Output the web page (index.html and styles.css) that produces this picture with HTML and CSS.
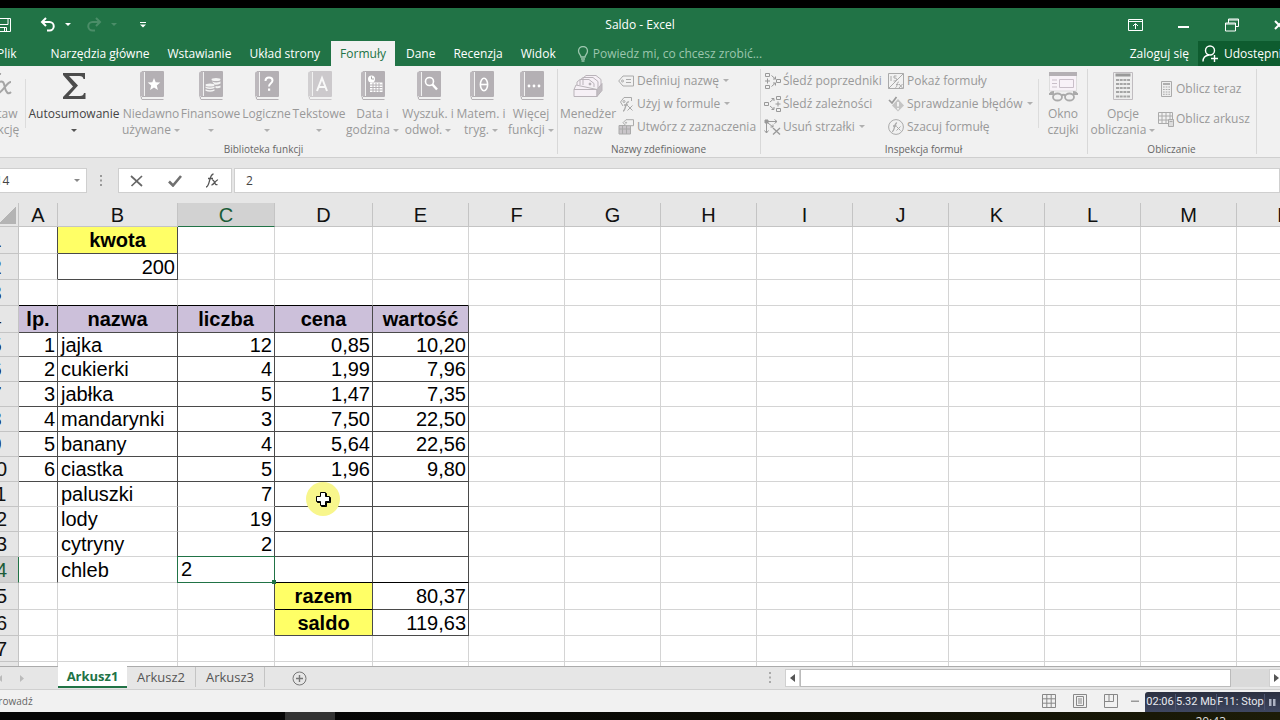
FILE: index.html
```html
<!DOCTYPE html>
<html lang="pl">
<head>
    <meta charset="UTF-8">
    <meta name="viewport" content="width=device-width, initial-scale=1.0">
    <title>Saldo - Excel</title>
    <link rel="stylesheet" href="styles.css">
</head>
<body>
    <svg class="defs" aria-hidden="true">
        <symbol id="book" viewBox="0 0 25 29">
            <path d="M3 .5h21.500v25H3a2 2 0 0 0 0 3h21.500" fill="none" stroke="#b4b0b4"/>
            <path d="M6 1h18.500v24H6z" fill="#b4b0b4"/>
            <path d="M1 2.500A2 2 0 0 1 3 .5h2V25H3q-2 0-2 2z" fill="#bdb9bd"/>
        </symbol>
    </svg>

    <header>
        <div class="title-bar">
            <div class="quick-access">
                <button aria-label="Zapisz"><svg width="16" height="14" viewBox="0 0 16 14" fill="none" stroke="#fff"><path d="M.5 .5h15v13H2.500l-2-2z"/><path d="M3 .5v6h10v-6M4.500 13.500v-4h7v4"/><path d="M9.500 10v3"/></svg></button>
                <button aria-label="Cofnij" class="undo"><svg width="16" height="15" viewBox="0 0 16 15" fill="none" stroke="#fff" stroke-width="2"><path d="M6 1 2 5l4 4M2 5h7.500a4.200 4.200 0 0 1 0 8.500H7"/></svg></button>
                <span class="arrow light"></span>
                <button aria-label="Ponów" class="redo"><svg width="16" height="15" viewBox="0 0 16 15" fill="none" stroke="#4b8d68" stroke-width="2"><path d="m10 1 4 4-4 4M14 5H6.500a4.200 4.200 0 0 0 0 8.500H9"/></svg></button>
                <span class="arrow dim"></span>
                <button aria-label="Dostosuj" class="customize"><svg width="6" height="6" viewBox="0 0 6 6" fill="#fff"><path d="M0 0h6v1H0zM0 2.500h6l-3 3z"/></svg></button>
            </div>
            <h1>Saldo - Excel</h1>
            <div class="window-buttons">
                <button aria-label="Opcje wstążki"><svg width="15" height="12" viewBox="0 0 15 12" fill="none" stroke="#fff"><path d="M.5 .5h14v11H.5zM.5 2.500h14M7.500 10V5M5 7l2.500-2.500L10 7"/></svg></button>
                <button aria-label="Minimalizuj"><svg width="12" height="12" viewBox="0 0 12 12"><path d="M0 7h11v2H0z" fill="#fff"/></svg></button>
                <button aria-label="Przywróć"><svg width="14" height="14" viewBox="0 0 14 14" fill="none" stroke="#fff"><path d="M3.500 5V1h10v7.500H11M3.500 2h10"/><path d="M.5 5h10v8H.5zM.5 6h10"/></svg></button>
                <button aria-label="Zamknij"><svg width="11" height="10" viewBox="0 0 11 10" fill="none" stroke="#fff" stroke-width="2"><path d="m1 1 8 8M9 1 1 9"/></svg></button>
            </div>
        </div>
        <nav class="tabs">
            <a href="#">Plik</a>
            <a href="#">Narzędzia główne</a>
            <a href="#">Wstawianie</a>
            <a href="#">Układ strony</a>
            <a href="#" class="active">Formuły</a>
            <a href="#">Dane</a>
            <a href="#">Recenzja</a>
            <a href="#">Widok</a>
            <a href="#" class="tell-me"><svg width="12" height="16" viewBox="0 0 12 16" fill="none" stroke="#9cc6ae" stroke-width="1.300"><path d="M4 11C4 9 1.500 8 1.500 5a4.500 4.500 0 0 1 9 0C10.500 8 8 9 8 11zM4 13h4M4.500 15h3"/></svg>Powiedz mi, co chcesz zrobić...</a>
            <a href="#" class="sign-in">Zaloguj się</a>
            <a href="#" class="share"><svg width="17" height="17" viewBox="0 0 17 17" fill="none" stroke="#fff" stroke-width="1.400"><circle cx="8" cy="5.500" r="4.500"/><path d="M1 16.500c0-4 2.500-6 6-6.500M12.500 10v7M9 13.500h7"/></svg>Udostępnij</a>
        </nav>
    </header>

    <section class="ribbon">
        <div class="group">
            <div class="tools library">
                <button class="big"><svg width="28" height="29" viewBox="0 0 28 29" fill="none" stroke="#a5a5a5" stroke-width="2"><path d="M2 27c5 1 6-4 7-10S11 2 16 3M5 10h9"/><path d="M14 11c5-2 5 2 6 6s3 7 6 4M26 11c-4 0-7 8-12 11"/></svg><span>Wstaw<br>funkcję</span></button>
                <button class="big enabled divided"><svg width="25" height="29" viewBox="0 0 25 29"><path d="M1 2h22v6h-1.500q-.5-3-4-3H7l9 9.500L6.500 25H18q3.500 0 4-3h1.500v6H1v-2l10-10.500L1 4z" fill="#4c4c4c"/></svg><span>Autosumowanie<br><i class="arrow"></i></span></button>
                <button class="big"><svg width="25" height="29" viewBox="0 0 25 29"><use href="#book"/><path d="m15 7 1.700 4.300 4.600.3-3.500 3 1.100 4.400-3.900-2.400-3.900 2.400 1.100-4.400-3.500-3 4.600-.3z" fill="#fff"/></svg><span>Niedawno<br>używane <i class="arrow"></i></span></button>
                <button class="big"><svg width="25" height="29" viewBox="0 0 25 29"><use href="#book"/><g fill="#f4f4f4"><ellipse cx="18" cy="8.500" rx="4.500" ry="1.500"/><path d="M14 10.500q4 2 8.500 0v2q-4 2-6 1zM17.500 15q3 .5 5-.5v2q-2 1-5 .6z"/><ellipse cx="12" cy="14" rx="4.500" ry="1.500"/><path d="M7.500 15.500q4.500 2 9 0v1.500q-4.500 2-9 0zM7.500 18.200q4.500 2 9 0v1.500q-4.500 2-9 0z"/></g></svg><span>Finansowe<br><i class="arrow"></i></span></button>
                <button class="big"><svg width="25" height="29" viewBox="0 0 25 29"><use href="#book"/><path d="M11.500 10q0-3.500 3.500-3.500t3.500 3c0 3-3.500 2.500-3.500 6" fill="none" stroke="#fff" stroke-width="2"/><path d="M14 17.500h2.200v2.300H14z" fill="#fff"/></svg><span>Logiczne<br><i class="arrow"></i></span></button>
                <button class="big"><svg width="25" height="29" viewBox="0 0 25 29" opacity=".6"><use href="#book"/><path d="m10 20 5-13 5 13M11.500 16h7" fill="none" stroke="#fff" stroke-width="2"/></svg><span>Tekstowe<br><i class="arrow"></i></span></button>
                <button class="big"><svg width="25" height="29" viewBox="0 0 25 29"><use href="#book"/><path d="M10 11.500h12.500V21H10z" fill="#fff"/><path d="M10 14h12.500M10 16.500h12.500M10 19h12.500M13 12v9M16 12v9M19 12v9" stroke="#b4b0b4"/><circle cx="11.500" cy="8" r="3.500" fill="#fff"/><path d="M11.500 5.500V8H14" fill="none" stroke="#aaa"/></svg><span>Data i<br>godzina <i class="arrow"></i></span></button>
                <button class="big"><svg width="25" height="29" viewBox="0 0 25 29"><use href="#book"/><g fill="none" stroke="#fff"><circle cx="13.500" cy="10.500" r="4" stroke-width="1.600"/><path d="m16.500 13.500 4.500 5" stroke-width="2.500"/></g></svg><span>Wyszuk. i<br>odwoł. <i class="arrow"></i></span></button>
                <button class="big"><svg width="25" height="29" viewBox="0 0 25 29"><use href="#book"/><g fill="none" stroke="#fff" stroke-width="1.600"><ellipse cx="15" cy="13.500" rx="3.600" ry="6.200"/><path d="M11.500 13.500h7"/></g></svg><span>Matem. i<br>tryg. <i class="arrow"></i></span></button>
                <button class="big"><svg width="25" height="29" viewBox="0 0 25 29"><use href="#book"/><g fill="#fff"><circle cx="10" cy="15" r="1.400"/><circle cx="15" cy="15" r="1.400"/><circle cx="20" cy="15" r="1.400"/></g></svg><span>Więcej<br>funkcji <i class="arrow"></i></span></button>
            </div>
            <h2>Biblioteka funkcji</h2>
        </div>
        <div class="group">
            <div class="tools names">
                <button class="big"><svg width="30" height="29" viewBox="0 0 30 29" fill="#f6f0f6" stroke="#b9b3b9"><path d="M10 14V7l3-2.500h10l5 4V16M7 14V9l3-2.500h10l5 4V17M4 15v-4l3-2.500h9l5 4V16"/><path d="M3 14 1 18.500v7h23v-7z"/><path d="M1 18.500h23M24 18.500l5-6v7l-5 6z" fill="#c2bdc2"/><circle cx="17" cy="13" r="1" fill="#999"/></svg><span>Menedżer<br>nazw</span></button>
                <div class="list">
                    <button><svg width="17" height="16" viewBox="0 0 17 16" fill="none" stroke="#aaa"><path d="M5 3h10.500v10H5L.7 8zM8 6.500h5M8 9.500h5"/><circle cx="4.500" cy="8" r="1"/></svg>Definiuj nazwę <i class="arrow"></i></button>
                    <button><svg width="17" height="16" viewBox="0 0 17 16" fill="none" stroke="#aaa"><path d="M13.500 5V1.500H6L2.500 6 5 10"/><circle cx="6" cy="5.500" r="1"/><path d="M5 15c3 0 2-10 6-9M6 9h4" stroke-width="1.300"/><path d="m9.500 9.500 5 5M14.500 9.500l-5 5"/></svg>Użyj w formule <i class="arrow"></i></button>
                    <button><svg width="17" height="16" viewBox="0 0 17 16" fill="none" stroke="#aaa"><path d="M1 6.500h11.500v8.500H1z" fill="#c9c5c9"/><path d="M1 10h11.500M4.500 7v8M8.500 7v8"/><path d="M8 .7h7.500v6H8L5 3.700z" fill="#f1f1f1"/><circle cx="8" cy="3.700" r=".6"/></svg>Utwórz z zaznaczenia</button>
                </div>
            </div>
            <h2>Nazwy zdefiniowane</h2>
        </div>
        <div class="group">
            <div class="tools audit">
                <div class="list">
                    <button><svg width="17" height="16" viewBox="0 0 17 16" fill="none" stroke="#999"><path d="M1.500 .5h4v3h-4zM1.500 12.500h4v3h-4zM12.500 6.500h4v3h-4zM1 8h5M3.500 5.500v5M7.500 2.500l4 3.500M11.500 3.500V6H9M7.500 13.500l4-3.500M9 10h2.500v2.500"/></svg>Śledź poprzedniki</button>
                    <button><svg width="17" height="16" viewBox="0 0 17 16" fill="none" stroke="#999"><path d="M12.500 .5h4v3h-4zM12.500 12.500h4v3h-4zM.5 6.500h4v3h-4zM11.500 8h5M14 5.500v5M6 6l4-3.500M7.500 2.500H10V5M6 10l4 3.500M10 11v2.500H7.500"/></svg>Śledź zależności</button>
                    <button><svg width="17" height="16" viewBox="0 0 17 16" fill="none" stroke="#999"><path d="M2.500 2v12M.5 11.500l2 2.500 2-2.500M2 2.500h11M10.500 .5l2.500 2-2.500 2M4 4l5 4M9 5.500V8H6.500"/><path d="m9 9 7 6.500M16 9l-7 6.500" stroke-width="1.300"/><path d="M1 1h3v3H1z" fill="#999"/></svg>Usuń strzałki <i class="arrow"></i></button>
                </div>
                <div class="list">
                    <button><svg width="17" height="16" viewBox="0 0 17 16" fill="none" stroke="#aaa"><path d="M.5 .5h15v15H.5zM.5 15.500l15-15M3 3v5M8.500 3H6v2q3-.5 2.500 1.500T5.500 8M7.500 14.500c2 0 1-6 3.500-5.500M8 11.500h2.500M11 11l3.500 4M14.500 11 11 15"/></svg>Pokaż formuły</button>
                    <button><svg width="17" height="16" viewBox="0 0 17 16" fill="none"><path d="m10 3 6 6.500-6 6-6-6z" fill="#c4c4c4"/><path d="M10 6v4.500M10 12v1.500" stroke="#fff" stroke-width="1.500"/><path d="m1 4 3 3 4.500-6" stroke="#9a9a9a" stroke-width="1.700"/></svg>Sprawdzanie błędów <i class="arrow"></i></button>
                    <button><svg width="17" height="16" viewBox="0 0 17 16" fill="none" stroke="#aaa"><circle cx="8" cy="8" r="7.400"/><path d="M4 12.500c3 0 2-9 5-8.500M5 7h3.500" stroke-width="1.300"/><path d="m8.500 7.500 4 4M12.500 7.500l-4 4"/></svg>Szacuj formułę</button>
                </div>
                <button class="big divided"><svg width="31" height="31" viewBox="0 0 31 31" fill="none"><path d="M1.500 3.500h27V20h-27z" fill="#f8f2f8" stroke="#ddd"/><path d="M1 1h28v4H1z" fill="#b4b0b4"/><path d="M4 9h5M4 12.500h5M4 16h5M11.500 8.500h14v8h-14z" stroke="#c9bfc9"/><g stroke="#aaa" stroke-width="1.800"><path d="M2 24q0-3 4-3M29 24q0-3-4-3M1 23h5M25 23h5"/><ellipse cx="9.500" cy="26" rx="4.500" ry="3.500"/><ellipse cx="21.500" cy="26" rx="4.500" ry="3.500"/><path d="M13.500 24.500q2-1.500 4 0"/></g></svg><span>Okno<br>czujki</span></button>
            </div>
            <h2>Inspekcja formuł</h2>
        </div>
        <div class="group">
            <div class="tools calc">
                <button class="big"><svg width="20" height="30" viewBox="0 0 20 30" fill="none"><path d="M.5 1.500h19v27H.5z" fill="#eee" stroke="#c0bcc0"/><path d="M2.500 4h15" stroke="#999" stroke-width="3"/><path d="M3 9h14M3 13h14M3 17h14M3 21h14M3 25.500h14" stroke="#a5a5a5" stroke-width="2.200" stroke-dasharray="3 .7"/></svg><span>Opcje<br>obliczania <i class="arrow"></i></span></button>
                <div class="list spread">
                    <button><svg width="16" height="16" viewBox="0 0 16 16" fill="none" stroke="#aaa"><path d="M3.500 .5h10v15h-10z" fill="#eee"/><path d="M5 3h7" stroke="#999" stroke-width="1.500"/><path d="M5 6h7M5 8.500h7M5 11h7M5 13.300h7" stroke-dasharray="1.700 1"/></svg>Oblicz teraz</button>
                    <button><svg width="16" height="16" viewBox="0 0 16 16" fill="none" stroke="#aaa"><path d="M.5 1.500h14v11H.5zM.5 5h14M.5 9h14M4 1.500v11M8 1.500v11M12 1.500v11"/><path d="M10.500 8.500h5v7h-5z" fill="#ddd"/><path d="M11.500 10.500h3"/></svg>Oblicz arkusz</button>
                </div>
            </div>
            <h2>Obliczanie</h2>
        </div>
        <div class="group"></div>
    </section>

    <section class="formula-bar">
        <div class="name-box"><input type="text" value="C14" aria-label="Pole nazwy"><span class="arrow"></span></div>
        <svg class="dots" width="3" height="12" viewBox="0 0 3 12" fill="#999"><path d="M0 0h2v2H0zM0 4.500h2v2H0zM0 9h2v2H0z"/></svg>
        <div class="entry-buttons">
            <button aria-label="Anuluj"><svg width="14" height="12" viewBox="0 0 14 12" fill="none" stroke="#666" stroke-width="1.700"><path d="m1 1 11 10M12 1 1.500 11"/></svg></button>
            <button aria-label="Wpis"><svg width="14" height="12" viewBox="0 0 14 12" fill="none" stroke="#707070" stroke-width="2.600"><path d="m1 6.500 4 4L13 1"/></svg></button>
            <button aria-label="Wstaw funkcję"><svg width="14" height="15" viewBox="0 0 14 15" fill="none" stroke="#555" stroke-width="1.300"><path d="M1 14c4 0 3-13 7.500-13M3 5.500h5"/><path d="M7 7c3-1 2 6 5.500 4.500M13 7c-2-.5-4 5-6.500 5"/></svg></button>
        </div>
        <input class="formula" type="text" value="2" aria-label="Pasek formuły">
    </section>

    <main class="sheet">
        <table>
            <colgroup>
                <col class="col-head"><col class="col-a"><col class="col-b"><col class="col-c"><col class="col-d">
                <col><col><col><col><col><col><col><col><col><col>
            </colgroup>
            <thead><tr id="letters"></tr></thead>
            <tbody id="rows"></tbody>
        </table>
    </main>

    <footer>
        <div class="sheet-bar">
            <div class="sheet-nav">
                <button aria-label="Poprzedni"><svg width="4" height="7" viewBox="0 0 4 7"><path d="M4 0v7L0 3.500z" fill="#bbb"/></svg></button>
                <button aria-label="Następny"><svg width="4" height="7" viewBox="0 0 4 7"><path d="M0 0v7l4-3.500z" fill="#bbb"/></svg></button>
            </div>
            <button class="sheet-tab active">Arkusz1</button>
            <button class="sheet-tab">Arkusz2</button>
            <button class="sheet-tab">Arkusz3</button>
            <button class="add-sheet" aria-label="Nowy arkusz"><svg width="15" height="15" viewBox="0 0 15 15" fill="none" stroke="#777"><circle cx="7.500" cy="7.500" r="6.500"/><path d="M4 7.500h7M7.500 4v7" stroke-width="1.400"/></svg></button>
            <svg class="dots" width="3" height="12" viewBox="0 0 3 12" fill="#aaa"><path d="M0 0h2v2H0zM0 4.500h2v2H0zM0 9h2v2H0z"/></svg>
            <div class="scrollbar">
                <button aria-label="W lewo"><svg width="5" height="8" viewBox="0 0 5 8"><path d="M5 0v8L0 4z" fill="#555"/></svg></button>
                <div class="thumb"></div>
                <button aria-label="W prawo"><svg width="5" height="8" viewBox="0 0 5 8"><path d="M0 0v8l5-4z" fill="#555"/></svg></button>
            </div>
        </div>
        <div class="status-bar">
            <span class="mode">Wprowadź</span>
            <div class="views">
                <button aria-label="Normalny"><svg width="14" height="14" viewBox="0 0 14 14" fill="none" stroke="#888"><path d="M.5 .5h13v13H.5zM.5 4.800h13M.5 9.200h13M4.800 .5v13M9.200 .5v13"/></svg></button>
                <button aria-label="Układ strony"><svg width="14" height="14" viewBox="0 0 14 14" fill="none" stroke="#888"><path d="M.5 .5h13v13H.5zM3.500 2.500h7v9h-7zM5 5h4M5 7h4M5 9h4"/></svg></button>
                <button aria-label="Podgląd podziału stron"><svg width="14" height="14" viewBox="0 0 14 14" fill="none" stroke="#888"><path d="M.5 .5h13v13H.5zM.5 7.500h9v-7M5 .5v7"/></svg></button>
                <button aria-label="Pomniejsz"><svg width="8" height="14" viewBox="0 0 8 14"><path d="M0 6.500h8v1.500H0z" fill="#999"/></svg></button>
            </div>
            <div class="recorder">
                <span class="time">02:06</span>
                <span class="size">5.32 Mb</span>
                <span class="stop">F11: Stop</span>
                <svg width="7" height="7" viewBox="0 0 7 7" fill="#aeb4c4"><path d="M0 0h2.500v7H0zM4 0h2.500v7H4z"/></svg>
            </div>
        </div>
        <div class="taskbar"><span class="window-slot"></span><time class="clock">20:43</time></div>
    </footer>

    <script>
        const letters = 'ABCDEFGHIJKLMN'.split('');

        // height, then cells as [column, value, classes]
        const rows = [
            { h: 27, cells: [['A', '', 'r'], ['B', 'kwota', 'yellow r b']] },
            { h: 26, cells: [['A', '', 'r'], ['B', '200', 'num r b']] },
            { h: 26, cells: [['A', '', 'black'], ['B', '', 'black'], ['C', '', 'black'], ['D', '', 'black'], ['E', '', 'black']] },
            { h: 27, cells: [['A', 'lp.', 'head r b'], ['B', 'nazwa', 'head r b'], ['C', 'liczba', 'head r b'], ['D', 'cena', 'head r b'], ['E', 'wartość', 'head r b']] },
            item('1', 'jajka', '12', '0,85', '10,20', 24),
            item('2', 'cukierki', '4', '1,99', '7,96'),
            item('3', 'jabłka', '5', '1,47', '7,35'),
            item('4', 'mandarynki', '3', '7,50', '22,50'),
            item('5', 'banany', '4', '5,64', '22,56'),
            item('6', 'ciastka', '5', '1,96', '9,80'),
            draft('paluszki', '7'),
            draft('lody', '19'),
            draft('cytryny', '2'),
            { h: 26, cells: [['A', '', 'r'], ['B', 'chleb', ''], ['C', '', 'edit'], ['D', '', 'r black'], ['E', '', 'r black']] },
            { h: 27, cells: [['C', '', 'r'], ['D', 'razem', 'yellow r black'], ['E', '80,37', 'num r b']] },
            { h: 26, cells: [['C', '', 'r'], ['D', 'saldo', 'yellow r b'], ['E', '119,63', 'num r b']] },
            { h: 26, cells: [] },
            { h: 26, cells: [] }
        ];

        function item(no, name, count, price, value, h = 25) {
            return { h, cells: [['A', no, 'num r b'], ['B', name, 'r b'], ['C', count, 'num r b'], ['D', price, 'num r b'], ['E', value, 'num r b']] };
        }

        function draft(name, count) {
            return { h: 25, cells: [['A', '', 'r'], ['B', name, 'r'], ['C', count, 'num r'], ['D', '', 'r b'], ['E', '', 'r b']] };
        }

        document.getElementById('letters').innerHTML = '<th class="corner"></th>' +
            letters.map(l => `<th class="${l === 'C' ? 'selected' : ''}">${l}</th>`).join('');

        document.getElementById('rows').innerHTML = rows.map((row, i) => {
            const cells = letters.map(l => {
                const cell = row.cells.find(c => c[0] === l) || [l, '', ''];
                return `<td class="${cell[2]}">${cell[1]}</td>`;
            }).join('');
            return `<tr style="height: ${row.h}px"><th class="${i === 13 ? 'selected' : ''}">${i + 1}</th>${cells}</tr>`;
        }).join('');

        // Cell being edited
        document.querySelector('.edit').innerHTML = '<input type="text" value="2" aria-label="C14"><span class="handle"></span>';

        // Mouse pointer with its highlight
        const target = document.getElementById('rows').rows[10].cells[4];
        target.classList.add('pointed');
        target.innerHTML = `<svg class="pointer" width="34" height="34" viewBox="0 0 34 34">
            <circle cx="17" cy="17" r="17" fill="#f8f68c"/>
            <path d="M15.500 11.500h5v4h4v5h-4v4h-5v-4h-4v-5h4z" fill="#000" stroke="#000"/>
            <path d="M14.500 10.500h5v4h4v5h-4v4h-5v-4h-4v-5h4z" fill="#fff" stroke="#000"/>
        </svg>`;
    </script>
</body>
</html>
```
FILE: styles.css
```css
:root {
    --green: #217346;
    --dark-green: #0e5c2f;
    --ribbon: #f1f1f1;
    --gray: #e6e6e6;
    --grid: #d4d4d4;
    --line: #4a4a4a;
    --disabled: #999;
}

* {
    margin: 0;
    padding: 0;
    box-sizing: border-box;
}

body {
    height: 100vh;
    display: flex;
    flex-direction: column;
    overflow: hidden;
    border-top: 8px solid #000;
    background: var(--gray);
    font: 12px/16px "Open Sans", "Noto Sans", sans-serif;
}

button,
input {
    border: none;
    background: none;
    font: inherit;
    color: inherit;
}

a {
    color: inherit;
    text-decoration: none;
}

svg {
    display: block;
    flex-shrink: 0;
}

.defs {
    position: absolute;
    width: 0;
    height: 0;
}

.arrow {
    display: inline-block;
    border: 3px solid transparent;
    border-top-color: #b0b0b0;
    border-bottom: none;
    vertical-align: middle;
}

.arrow.light {
    border-top-color: #fff;
}

.arrow.dim {
    border-top-color: #4b8d68;
}

/* Title bar */
header {
    background: var(--green);
    color: #fff;
}

.title-bar {
    height: 33px;
    display: flex;
    align-items: center;
}

.title-bar h1 {
    font-size: 12px;
    font-weight: 400;
}

.quick-access,
.window-buttons {
    flex: 1;
    display: flex;
    align-items: center;
}

.quick-access {
    margin-left: -5px;
}

.undo {
    margin: 0 9px 0 29px;
}

.redo {
    margin: 0 9px 0 15px;
}

.customize {
    margin-left: 23px;
}

.window-buttons {
    justify-content: flex-end;
    gap: 35px;
    margin-right: -5px;
}

/* Ribbon tabs */
.tabs {
    height: 25px;
    display: flex;
    line-height: 25px;
    white-space: nowrap;
    margin-left: -12px;
}

.tabs a {
    padding: 0 9px;
}

.tabs a:first-child {
    margin-right: 16px;
}

.tabs .active {
    margin: 0 2px;
    background: var(--ribbon);
    color: var(--green);
}

.tabs .tell-me {
    display: flex;
    align-items: center;
    gap: 4px;
    padding-left: 12px;
    color: #9cc6ae;
}

.tabs .sign-in {
    margin-left: auto;
}

.tabs .share {
    width: 82px;
    display: flex;
    align-items: center;
    gap: 5px;
    padding: 0 4px;
    background: var(--dark-green);
    overflow: hidden;
}

/* Ribbon */
.ribbon {
    height: 92px;
    display: flex;
    flex-shrink: 0;
    margin-left: -30px;
    background: var(--ribbon);
    border-bottom: 1px solid #cfcfcf;
    color: var(--disabled);
    white-space: nowrap;
}

.group {
    padding: 3px 1px 0;
    position: relative;
}

.group + .group::before {
    content: "";
    position: absolute;
    left: 0;
    top: 3px;
    bottom: 3px;
    border-left: 1px solid #d8d8d8;
}

.group h2 {
    font-size: 10px;
    line-height: 14px;
    font-weight: 400;
    text-align: center;
    color: #666;
}

.tools {
    height: 73px;
    display: grid;
}

.big {
    display: flex;
    flex-direction: column;
    align-items: center;
    padding-top: 2px;
}

.big span {
    margin-top: auto;
    height: 36px;
    text-align: center;
}

.big svg {
    max-height: 32px;
}

.enabled {
    color: #444;
}

.enabled .arrow {
    border-top-color: #555;
}

.library {
    grid-template-columns: 56px 94px 60px 59px 53px 52px 55px 56px 50px 50px;
}

.names {
    grid-template-columns: 60px 141px;
}

.audit {
    grid-template-columns: 124px 152px 46px;
    padding-left: 3px;
}

.calc {
    grid-template-columns: 70px 97px;
}

.list {
    display: flex;
    flex-direction: column;
}

.list button {
    height: 23px;
    display: flex;
    align-items: center;
    gap: 2px;
}

.list .arrow {
    margin-left: 2px;
}

.spread {
    padding-top: 5px;
}

.spread button {
    height: 30px;
}

.divided {
    position: relative;
}

.divided::before {
    content: "";
    position: absolute;
    left: -2px;
    top: 10px;
    height: 49px;
    border-left: 1px solid #dcdcdc;
}

/* Formula bar */
.formula-bar {
    display: flex;
    align-items: center;
    flex-shrink: 0;
    height: 45px;
    margin-left: -18px;
}

.name-box,
.entry-buttons,
.formula {
    height: 25px;
    background: #fff;
    border: 1px solid #cfcfcf;
    color: #444;
}

.name-box {
    width: 105px;
    display: flex;
    align-items: center;
    padding: 0 6px 0 5px;
}

.name-box input {
    width: 86px;
}

.name-box .arrow {
    border-top-color: #888;
}

.formula-bar .dots {
    margin: 0 15px 0 13px;
}

.entry-buttons {
    width: 114px;
    display: flex;
    align-items: center;
    justify-content: space-between;
    padding: 0 12px 0 11px;
}

.formula {
    flex: 1;
    margin-left: 2px;
    padding-left: 11px;
}

/* Sheet */
.sheet {
    flex: 1;
    min-height: 0;
    overflow: hidden;
    background: #fff;
    font: 20px/22px "Liberation Sans", Arial, sans-serif;
    color: #000;
}

table {
    width: 1359px;
    margin-left: -26px;
    table-layout: fixed;
    border-collapse: separate;
    border-spacing: 0;
}

col {
    width: 96px;
}

.col-head {
    width: 45px;
}

.col-a {
    width: 39px;
}

.col-b {
    width: 120px;
}

.col-c {
    width: 97px;
}

.col-d {
    width: 98px;
}

th {
    background: var(--gray);
    border-right: 1px solid #c4c4c4;
    border-bottom: 1px solid #c4c4c4;
    font-weight: 400;
    color: #111;
}

thead tr {
    height: 24px;
}

thead th.selected {
    background: #d2d2d2;
    color: #1a5c38;
    border-bottom: 1px solid var(--green);
}

tbody th.selected {
    background: #d2d2d2;
    color: #1a5c38;
    border-right: 1px solid var(--green);
}

.corner {
    background: linear-gradient(135deg, transparent 50%, #b4b4b4 50%) right 2px bottom 2px / 18px 18px no-repeat var(--gray);
}

td {
    padding: 0 2px 0 3px;
    border-right: 1px solid var(--grid);
    border-bottom: 1px solid var(--grid);
    white-space: nowrap;
}

.r {
    border-right-color: var(--line);
}

.b {
    border-bottom-color: var(--line);
}

.black {
    border-bottom-color: #000;
}

.num {
    text-align: right;
}

.yellow,
.head {
    background: #ffff66;
    font-weight: 700;
    text-align: center;
    padding: 0;
}

.head {
    background: #ccc0da;
}

.edit,
.pointed {
    position: relative;
}

.edit input {
    position: absolute;
    left: -1px;
    top: -1px;
    width: 98px;
    height: 27px;
    padding-left: 3px;
    border: 1px solid var(--green);
    background: #fff;
}

.handle {
    position: absolute;
    right: -2px;
    bottom: -2px;
    width: 4px;
    height: 4px;
    background: var(--green);
}

.pointer {
    position: absolute;
    left: 31px;
    top: 0;
}

/* Sheet tabs */
footer {
    flex-shrink: 0;
}

.sheet-bar {
    height: 24px;
    display: flex;
    border-top: 1px solid #ababab;
    border-bottom: 1px solid #d0d0d0;
    font-size: 13px;
    color: #555;
}

.sheet-nav {
    width: 58px;
    display: flex;
    align-items: center;
    gap: 18px;
}

.sheet-nav button:first-child {
    margin-left: -2px;
}

.sheet-tab {
    height: 20px;
    width: 69px;
    flex-shrink: 0;
    border-right: 1px solid #c4c4c4;
}

.sheet-tab.active {
    margin-top: -1px;
    height: 22px;
    background: #fff;
    border-right: none;
    border-bottom: 2px solid var(--green);
    color: var(--green);
    font-weight: 700;
}

.add-sheet {
    margin-left: 27px;
}

.sheet-bar .dots {
    margin: 5px 13px 0 auto;
}

.scrollbar {
    width: 39%;
    height: 18px;
    margin: 2px -4px 0 0;
    display: flex;
    background: #dadada;
}

.scrollbar button {
    width: 15px;
    display: flex;
    align-items: center;
    justify-content: center;
    background: #fff;
    border: 1px solid #d0d0d0;
}

.thumb {
    flex: 1;
    margin-right: 38px;
    background: #fff;
    border: 1px solid #bbb;
}

/* Status bar */
.status-bar {
    height: 22px;
    display: flex;
    background: var(--ribbon);
    color: #666;
}

.mode {
    margin-left: -17px;
    font-size: 10px;
    line-height: 22px;
}

.views {
    margin-left: auto;
    display: flex;
    align-items: center;
    gap: 17px;
}

.views button:last-child {
    margin-left: -4px;
}

.recorder {
    width: 135px;
    height: 20px;
    margin: 2px 0 0 6px;
    display: flex;
    align-items: center;
    border-radius: 3px 0 0;
    background: linear-gradient(#2b3040, #3f4761);
    font: 11px/16px Roboto, sans-serif;
    color: #e8eaf0;
}

.recorder span {
    display: flex;
    justify-content: center;
    overflow: hidden;
    white-space: nowrap;
    border-right: 1px solid #4c5470;
}

.recorder .time {
    width: 31px;
}

.recorder .size {
    width: 41px;
}

.recorder .stop {
    width: 48px;
    margin-right: 4px;
}

.taskbar {
    height: 8px;
    display: flex;
    justify-content: space-between;
    overflow: hidden;
    padding: 0 54px 0 285px;
    background: linear-gradient(90deg, #060606 26%, #0c0c04 60%, #1c1c08);
    color: #ddd;
}

.window-slot {
    width: 50px;
    background: #333;
}

.clock {
    padding-top: 2px;
}
```
